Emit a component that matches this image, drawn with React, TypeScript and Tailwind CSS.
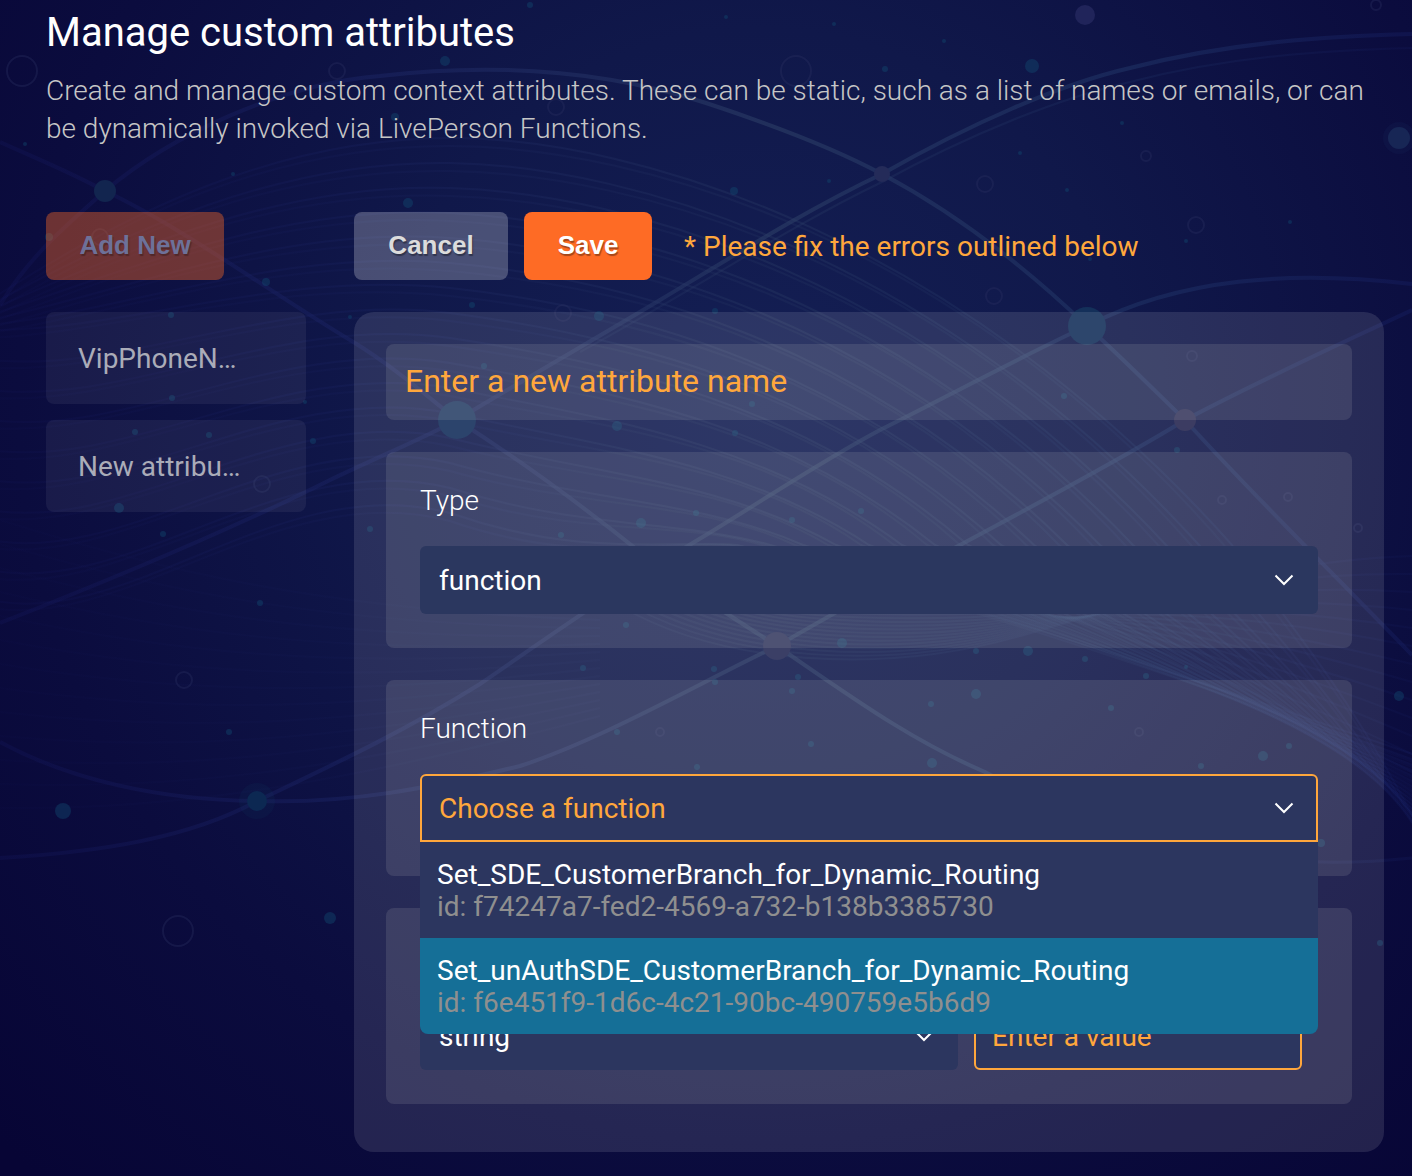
import { useState } from "react";
import type { ReactNode } from "react";

const functions = [
  { name: "Set_SDE_CustomerBranch_for_Dynamic_Routing", id: "f74247a7-fed2-4569-a732-b138b3385730" },
  { name: "Set_unAuthSDE_CustomerBranch_for_Dynamic_Routing", id: "f6e451f9-1d6c-4c21-90bc-490759e5b6d9" },
];

const attributes = ["VipPhoneN…", "New attribu…"];

// Large nodes where the strands cross: x, y, radius, colour
const nodes: [number, number, number, string][] = [
  [105, 191, 11, "#12254f"], [457, 420, 19, "#132d5a"], [1087, 326, 19, "#14305a"],
  [882, 174, 8, "#242b59"], [1185, 420, 11, "#25254f"], [777, 646, 14, "#232854"],
  [257, 801, 10, "#0c2450"], [1085, 15, 10, "#20245a"], [1399, 138, 11, "#162352"],
];

// Small dots: x, y, radius
const dots: [number, number, number][] = [
  [1032, 66, 7], [63, 811, 8], [330, 918, 6], [445, 61, 5], [395, 117, 4], [408, 203, 5], [266, 282, 4],
  [233, 174, 2], [25, 144, 2], [530, 5, 3], [726, 17, 2], [834, 24, 2], [944, 41, 2], [885, 69, 3],
  [1122, 123, 2], [1020, 153, 2], [829, 181, 2], [734, 191, 4], [1067, 190, 2], [1290, 222, 2],
  [1186, 241, 2], [1090, 259, 2], [49, 237, 4], [599, 316, 5], [350, 317, 2], [472, 305, 3], [715, 311, 3],
  [171, 315, 3], [172, 398, 3], [305, 402, 2], [135, 432, 3], [209, 435, 3], [313, 441, 3], [119, 508, 5],
  [163, 534, 3], [260, 603, 3], [370, 529, 3], [617, 426, 5], [641, 523, 5], [484, 366, 3], [561, 535, 3],
  [735, 433, 3], [752, 404, 3], [1064, 396, 3], [1177, 450, 3], [792, 520, 3], [861, 511, 3], [696, 513, 3],
  [583, 668, 3], [626, 625, 3], [842, 643, 5], [1028, 651, 5], [976, 651, 3], [1085, 659, 3], [1186, 667, 2],
  [1146, 676, 3], [714, 669, 3], [715, 682, 3], [798, 677, 3], [792, 691, 3], [976, 694, 5], [931, 704, 3],
  [1111, 708, 3], [811, 744, 3], [932, 763, 5], [1263, 756, 5], [1289, 746, 3], [1201, 766, 3], [229, 732, 3],
  [617, 732, 3], [697, 767, 3], [1399, 696, 5], [1321, 843, 4], [1380, 943, 3],
];

const rings: [number, number, number][] = [
  [22, 71, 15], [796, 71, 15], [178, 931, 15], [337, 71, 8], [556, 107, 8], [985, 184, 8],
  [1196, 225, 8], [994, 296, 8], [100, 237, 8], [563, 313, 8], [262, 484, 8], [184, 680, 8],
  [1146, 156, 5], [1376, 5, 5], [1192, 356, 5], [1222, 500, 4], [1288, 497, 4], [1358, 528, 4],
  [1139, 732, 4], [660, 732, 4],
];

const strands = [
  "M0 305 C30 255 70 222 105 191 C170 136 280 84 380 76 C500 62 610 72 706 103 C770 124 830 146 882 174 C950 210 1020 262 1087 326 C1120 356 1150 386 1185 420 C1250 492 1320 560 1412 655",
  "M0 142 C40 160 70 172 105 191 C180 226 270 292 350 340 C390 364 425 394 457 420 C520 460 590 512 640 552 C680 584 730 616 777 646 C850 696 910 740 985 772 C1050 806 1120 856 1200 868",
  "M0 623 C110 580 230 530 330 480 C380 456 420 440 457 420 C530 376 600 336 660 300 C740 252 810 208 882 174 C970 124 1060 84 1130 68 C1230 42 1330 36 1412 34",
  "M0 742 C70 780 160 800 257 801 C350 804 430 788 520 766 C600 740 690 688 777 646 C850 604 900 576 960 545 C1040 502 1120 460 1185 420 C1260 380 1340 344 1412 310",
  "M0 858 C100 852 190 838 257 801 C330 766 400 734 480 684 C550 636 620 586 706 535 C770 496 820 462 880 430 C960 390 1030 352 1087 326 C1180 278 1290 270 1412 284",
];

// Parallel threads that fan out of the left edge, arch over and gather at the lower right
function thread(i: number, shift: number) {
  const startY = 300 + (i < 7 ? i * 5 : 30 + (i - 6) * 30);
  const rise = Math.max(0, 90 - i * 13);
  const midY = 138 + i * 25 + shift;
  const slope = i * 3;
  const endX = 1232 - i * 33 - shift;
  return [
    `M-10 ${startY + shift}`,
    `C130 ${startY - rise + i * 2} 280 ${midY - slope} 450 ${midY}`,
    `C${640 - i * 4} ${midY + slope} ${960 - i * 20} ${240 + i * 20} ${endX} 545`,
    `C${endX + 60 + i * 10} ${630 - i * 2} ${1350 - i * 20} ${690 - i * 4} 1430 ${850 - i * 6 + shift}`,
  ].join(" ");
}

const fan = Array.from({ length: 16 }, (_, i) => i);
const weave = Array.from({ length: 13 }, (_, i) => i);

function Backdrop() {
  return (
    <svg
      aria-hidden="true"
      className="pointer-events-none absolute inset-0 h-full w-full"
      viewBox="0 0 1412 1176"
      preserveAspectRatio="xMidYMin slice"
    >
      <defs>
        <radialGradient id="glow" gradientUnits="userSpaceOnUse" cx="760" cy="400" r="1060">
          <stop offset="0" stopColor="#141f54" />
          <stop offset="0.35" stopColor="#10184a" />
          <stop offset="0.7" stopColor="#0b0c3e" />
          <stop offset="1" stopColor="#070535" />
        </radialGradient>
        <linearGradient id="strand" gradientUnits="userSpaceOnUse" x1="0" y1="0" x2="1412" y2="0">
          <stop offset="0" stopColor="#14175c" stopOpacity="0.3" />
          <stop offset="0.25" stopColor="#1b2464" stopOpacity="0.5" />
          <stop offset="0.55" stopColor="#2c3e66" stopOpacity="0.6" />
          <stop offset="0.8" stopColor="#22386a" stopOpacity="0.5" />
          <stop offset="1" stopColor="#182268" stopOpacity="0.35" />
        </linearGradient>
      </defs>
      <rect width="1412" height="1176" fill="url(#glow)" />
      <g fill="none" stroke="url(#strand)">
        {fan.map((i) => (
          <g key={i} strokeWidth="2">
            <path opacity="0.55" d={thread(i, 0)} />
            <path opacity="0.35" d={thread(i, 8)} />
          </g>
        ))}
        {weave.map((i) => (
          <g key={i} strokeWidth="2">
            <path opacity="0.4" d={`M${620 + i * 12} 606 C${720 + i * 8} ${664 - i * 4} ${880 + i * 6} ${676 - i * 5} 1020 ${636 - i * 2} S1280 ${560 + i * 12} 1412 ${556 + i * 18}`} />
            <path opacity="0.2" d={`M0 ${520 + i * 24} C160 ${570 + i * 20} 320 ${610 + i * 15} 600 ${620 + i * 8}`} />
          </g>
        ))}
        {strands.map((d) => (
          <path key={d} d={d} strokeWidth="4" />
        ))}
        <path d="M1040 800 C1150 850 1280 872 1412 858" strokeWidth="3" opacity="0.6" />
        <path d="M580 352 C690 292 790 226 882 182 C970 134 1060 98 1130 82 C1230 56 1330 50 1412 48" strokeWidth="2" opacity="0.5" />
      </g>
      {rings.map(([x, y, r]) => (
        <circle key={`${x}-${y}`} cx={x} cy={y} r={r} fill="none" stroke="#2b3262" strokeOpacity="0.35" strokeWidth="2" />
      ))}
      {dots.map(([x, y, r]) => (
        <circle key={`${x}-${y}`} cx={x} cy={y} r={r} fill="#124e74" fillOpacity="0.4" />
      ))}
      {nodes.map(([x, y, r, color]) => (
        <circle key={`${x}-${y}`} cx={x} cy={y} r={r} fill={color} />
      ))}
      <circle cx="257" cy="801" r="18" fill="#10506c" fillOpacity="0.1" />
      <circle cx="1399" cy="138" r="16" fill="#2c4878" fillOpacity="0.1" />
    </svg>
  );
}

function Chevron() {
  return (
    <svg
      aria-hidden="true"
      className="pointer-events-none absolute right-6 top-1/2 h-3 w-5 -translate-y-1/2"
      viewBox="0 0 20 12"
      fill="none"
      stroke="white"
      strokeWidth="2"
    >
      <path d="M1.5 1.5 L10 10 L18.5 1.5" />
    </svg>
  );
}

function Panel({ children }: { children: ReactNode }) {
  return <section className="rounded-lg bg-[#dcdad2]/12 p-[34px]">{children}</section>;
}

export default function App() {
  const [chosen, setChosen] = useState("");
  const [open, setOpen] = useState(true);

  return (
    <div className="relative min-h-screen bg-[#070535] font-['Roboto',sans-serif] text-[28px] text-white">
      <Backdrop />
      <main className="relative pt-[9px] pr-7 pb-6 pl-[46px]">
        <h1 className="text-[40px] leading-[48px]">Manage custom attributes</h1>
        <p className="mt-[15px] leading-[38px] font-light text-[#c6c6c6]">
          Create and manage custom context attributes. These can be static, such as a list of names or emails, or can be
          dynamically invoked via LivePerson Functions.
        </p>

        <div className="mt-16 flex gap-12">
          <aside className="w-[260px] shrink-0">
            <button
              type="button"
              disabled
              className="block h-[68px] w-[178px] rounded-lg bg-[#fe6b25]/40 pb-0.5 font-['Liberation_Sans',sans-serif] text-[26px] font-bold text-[#6d7199] [text-shadow:1px_2px_1px_rgba(0,0,0,0.25)]"
            >
              Add New
            </button>
            <ul className="mt-8 flex flex-col gap-4">
              {attributes.map((name) => (
                <li key={name}>
                  <button
                    type="button"
                    className="block h-[92px] w-full rounded-lg bg-white/6 px-8 pt-0.5 text-left text-[#aaacb8]"
                  >
                    {name}
                  </button>
                </li>
              ))}
            </ul>
          </aside>

          <form className="min-w-0 flex-1" onSubmit={(e) => e.preventDefault()}>
            <div className="flex items-center">
              <button
                type="button"
                className="h-[68px] w-[154px] rounded-lg bg-white/24 pb-0.5 font-['Liberation_Sans',sans-serif] text-[26px] font-bold text-[#dcdcdc] [text-shadow:1px_2px_1px_rgba(0,0,0,0.35)]"
              >
                Cancel
              </button>
              <button
                type="submit"
                className="ml-4 h-[68px] w-32 rounded-lg bg-[#fe6b25] pb-0.5 font-['Liberation_Sans',sans-serif] text-[26px] font-bold [text-shadow:1px_2px_1px_rgba(0,0,0,0.35)]"
              >
                Save
              </button>
              <p role="alert" className="ml-8 pt-0.5 text-[#ffa73c]">
                * Please fix the errors outlined below
              </p>
            </div>

            <div className="mt-8 flex flex-col gap-8 rounded-[20px] bg-white/11 px-8 pt-8 pb-12">
              <input
                type="text"
                aria-label="Attribute name"
                placeholder="Enter a new attribute name"
                className="h-[76px] w-full rounded-lg bg-[#dcdad2]/12 px-[19px] pb-0.5 text-[32px] outline-none placeholder:text-[#ffa73c] placeholder:opacity-100"
              />

              <Panel>
                <label htmlFor="type" className="block pt-px leading-7 font-light">
                  Type
                </label>
                <div className="relative mt-[31px]">
                  <select
                    id="type"
                    className="block h-[68px] w-full appearance-none rounded-md bg-[#2b375f] px-[19px] pt-0.5 outline-none"
                  >
                    <option>function</option>
                  </select>
                  <Chevron />
                </div>
              </Panel>

              <Panel>
                <span id="function-label" className="block pt-px leading-7 font-light">
                  Function
                </span>
                <div className="relative z-10 mt-[31px]">
                  <button
                    type="button"
                    aria-haspopup="listbox"
                    aria-expanded={open}
                    aria-labelledby="function-label function-value"
                    onClick={() => setOpen(!open)}
                    className="block h-[68px] w-full rounded-t-md border-2 border-[#ffa73c] bg-[#2c365f] px-[17px] pt-0.5 text-left text-[#ffa73c]"
                  >
                    <span id="function-value">{chosen || "Choose a function"}</span>
                  </button>
                  <Chevron />
                  {open && (
                    <ul
                      role="listbox"
                      aria-labelledby="function-label"
                      className="absolute inset-x-0 top-full overflow-hidden rounded-b-lg"
                    >
                      {functions.map((fn, i) => (
                        <li key={fn.id} role="presentation">
                          <button
                            type="button"
                            role="option"
                            aria-selected={i === 1}
                            onClick={() => {
                              setChosen(fn.name);
                              setOpen(false);
                            }}
                            className={`block h-24 w-full px-[17px] pt-0.5 text-left leading-8 ${i === 1 ? "bg-[#156f97]" : "bg-[#2c365f]"}`}
                          >
                            <span className="block">{fn.name}</span>
                            <span className="block text-[#8f8f8f]">id: {fn.id}</span>
                          </button>
                        </li>
                      ))}
                    </ul>
                  )}
                </div>
              </Panel>

              <Panel>
                <div className="mt-[60px] flex gap-4 pr-4">
                  <div className="relative min-w-0 flex-1">
                    <select
                      aria-label="Value type"
                      className="block h-[68px] w-full appearance-none rounded-md bg-[#2c365f] px-[19px] pt-0.5 outline-none"
                    >
                      <option>string</option>
                    </select>
                    <Chevron />
                  </div>
                  <input
                    type="text"
                    aria-label="Value"
                    placeholder="Enter a value"
                    className="h-[68px] w-[328px] rounded-md border-2 border-[#ffa73c] bg-[#2c365f] px-4 outline-none placeholder:text-[#ffa73c] placeholder:opacity-100"
                  />
                </div>
              </Panel>
            </div>
          </form>
        </div>
      </main>
    </div>
  );
}
